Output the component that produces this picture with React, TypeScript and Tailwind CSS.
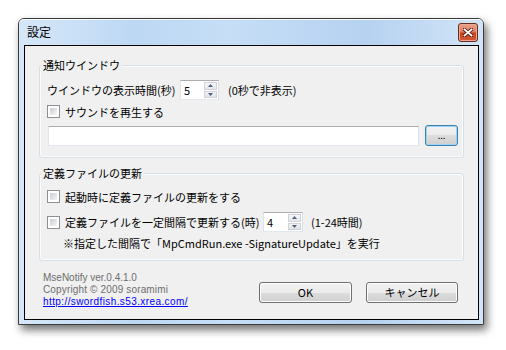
import React from 'react';

const ui = { fontFamily: '"Noto Sans CJK JP", "Noto Sans", sans-serif' };
const small = { fontFamily: '"Liberation Sans", Arial, sans-serif' };

function Checkbox() {
	return (
		<div className="w-[13px] h-[13px] shrink-0 border border-[#8e8f8f] bg-white p-[2px]">
			<div className="w-full h-full bg-linear-to-br from-[#c9cdd3] to-[#f7f7f7]" />
		</div>
	);
}

function Spinner({ value, width }: { value: string; width: string }) {
	return (
		<div
			className={`${width} h-[20px] shrink-0 flex border border-[#abadb3] border-b-[#e3e9ef] border-l-[#e2e3ea] border-r-[#dbdfe6] bg-white`}
		>
			<div className="flex-1 pl-[3px] text-[11px] leading-[18px] text-black">{value}</div>
			<div className="w-[14px] flex flex-col py-[1px] pr-[1px] gap-[1px]">
				<div className="flex-1 flex items-center justify-center border border-[#cfd3d9] bg-linear-to-b from-[#f7f7f7] to-[#e4e6ea]">
					<svg width="5" height="3" viewBox="0 0 5 3">
						<path d="M2.5 0 L5 3 L0 3 Z" fill="#4d6185" />
					</svg>
				</div>
				<div className="flex-1 flex items-center justify-center border border-[#cfd3d9] bg-linear-to-b from-[#f2f2f2] to-[#e0e2e6]">
					<svg width="5" height="3" viewBox="0 0 5 3">
						<path d="M0 0 L5 0 L2.5 3 Z" fill="#4d6185" />
					</svg>
				</div>
			</div>
		</div>
	);
}

function PushButton({ label, width }: { label: string; width: string }) {
	return (
		<div
			className={`${width} h-[21px] flex items-center justify-center rounded-[3px] border border-[#707070] shadow-[inset_0_0_0_1px_#fcfcfc] bg-[linear-gradient(to_bottom,#f2f2f2_0%,#ebebeb_50%,#dddddd_50%,#cfcfcf_100%)] text-[11px] text-black`}
		>
			{label}
		</div>
	);
}

function GroupLabel({ text }: { text: string }) {
	return (
		<div className="absolute left-[1px] -top-[8px] px-[2px] bg-[#f0f0f0] text-[11px] leading-[14px] text-black">
			{text}
		</div>
	);
}

export default function App() {
	return (
		<div className="w-[506px] h-[350px] bg-white pt-[18px] pl-[18px]" style={ui}>
			<div className="w-[466px] h-[307px] flex flex-col border border-[#3b3b3b] rounded-t-[6px] shadow-[3px_5px_9px_rgba(0,0,0,0.55)] bg-[linear-gradient(to_right,#d6e7f8_0%,#bdd8f4_25%,#c6def6_45%,#b6d2f1_75%,#d2e4f7_100%)]">
				{/* title bar */}
				<div className="h-[26px] flex items-center justify-between pl-[8px] pr-[5px] rounded-t-[5px] shadow-[inset_0_1px_0_#f4f9fe]">
					<div className="text-[12px] text-black">設定</div>
					<div className="w-[20px] h-[19px] flex items-center justify-center rounded-[3px] border border-[#6e2c1c] shadow-[inset_0_0_0_1px_#eaa893] bg-[linear-gradient(to_bottom,#eba48c_0%,#dc7d5f_45%,#c43f1b_55%,#d35d39_100%)]">
						<svg width="10" height="9" viewBox="0 0 10 9">
							<path d="M1.5 1.5 L8.5 7.5 M8.5 1.5 L1.5 7.5" stroke="#4a1a10" strokeWidth="3.4" strokeLinecap="square" />
							<path d="M1.5 1.5 L8.5 7.5 M8.5 1.5 L1.5 7.5" stroke="#ffffff" strokeWidth="1.8" strokeLinecap="square" />
						</svg>
					</div>
				</div>

				{/* client area */}
				<div className="flex-1 ml-[5px] mr-[4px] mb-[4px] border border-black bg-[#f0f0f0] px-[14px] flex flex-col text-[11px] text-black">
					{/* 通知ウインドウ */}
					<div className="relative mt-[19px] rounded-[3px] border border-[#d5dfe5] shadow-[inset_0_0_0_1px_#fbfcfd] pt-[14px] pb-[11px] pl-[7px]">
						<GroupLabel text="通知ウインドウ" />
						<div className="h-[20px] flex items-center">
							<div className="w-[133px] leading-[14px]">ウインドウの表示時間(秒)</div>
							<Spinner value="5" width="w-[39px]" />
							<div className="ml-[9px] leading-[14px]">(0秒で非表示)</div>
						</div>
						<div className="mt-[5px] h-[13px] flex items-center">
							<Checkbox />
							<div className="ml-[5px] leading-[14px]">サウンドを再生する</div>
						</div>
						<div className="mt-[7px] h-[21px] flex items-center">
							<div className="ml-[1px] w-[371px] h-[20px] border border-[#abadb3] border-b-[#e3e9ef] border-l-[#e2e3ea] border-r-[#dbdfe6] bg-white" />
							<div className="ml-[6px] w-[33px] h-[21px] flex items-center justify-center rounded-[3px] border border-[#3c7fb1] shadow-[inset_0_0_0_1px_#9bd4f5] bg-[linear-gradient(to_bottom,#f2f2f2_0%,#ebebeb_50%,#dddddd_50%,#cfcfcf_100%)] text-[9px] leading-none">
								...
							</div>
						</div>
					</div>

					{/* 定義ファイルの更新 */}
					<div className="relative mt-[15px] rounded-[3px] border border-[#d5dfe5] shadow-[inset_0_0_0_1px_#fbfcfd] pt-[16px] pb-[10px] pl-[7px]">
						<GroupLabel text="定義ファイルの更新" />
						<div className="h-[13px] flex items-center">
							<Checkbox />
							<div className="ml-[5px] leading-[14px]">起動時に定義ファイルの更新をする</div>
						</div>
						<div className="mt-[9px] h-[20px] flex items-center">
							<Checkbox />
							<div className="ml-[5px] w-[198px] leading-[14px]">定義ファイルを一定間隔で更新する(時)</div>
							<Spinner value="4" width="w-[40px]" />
							<div className="ml-[8px] leading-[14px]">(1-24時間)</div>
						</div>
						<div className="mt-[4px] h-[14px] pl-[16px] leading-[14px]">
							※指定した間隔で「MpCmdRun.exe -SignatureUpdate」を実行
						</div>
					</div>

					{/* footer */}
					<div className="mt-[11px] flex justify-between">
						<div className="pl-[4px] text-[10px] leading-[12px]" style={small}>
							<div className="text-[#6d6d6d]">MseNotify ver.0.4.1.0</div>
							<div className="text-[#6d6d6d] tracking-[0.15px]">Copyright © 2009 soramimi</div>
							<div className="text-[#0000ff] underline tracking-[0.4px]">http://swordfish.s53.xrea.com/</div>
						</div>
						<div className="mt-[10px] mr-[6px] flex gap-[14px]">
							<PushButton label="OK" width="w-[93px]" />
							<PushButton label="キャンセル" width="w-[92px]" />
						</div>
					</div>
				</div>
			</div>
		</div>
	);
}
